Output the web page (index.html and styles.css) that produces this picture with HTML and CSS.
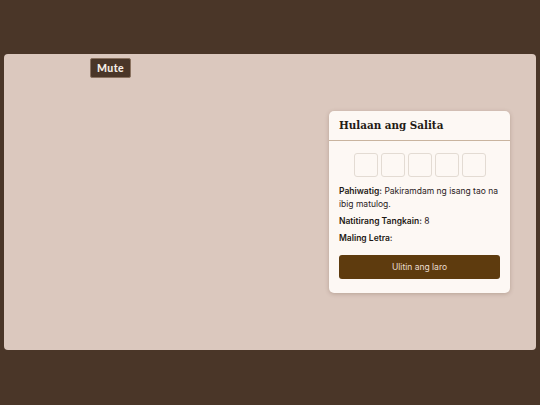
FILE: index.html
```
<!DOCTYPE html>
<html>
<head>
<meta charset="utf-8">
<link rel="stylesheet" href="styles.css">
</head>
<body>
<div class="page">
  <div class="stage">
    <button class="mute">Mute</button>
    <div class="card">
      <div class="card-head">Hulaan ang Salita</div>
      <div class="card-body">
        <div class="slots">
          <span class="slot"></span><span class="slot"></span><span class="slot"></span><span class="slot"></span><span class="slot"></span>
        </div>
        <p class="line"><b>Pahiwatig:</b> Pakiramdam ng isang tao na ibig matulog.</p>
        <p class="line"><b>Natitirang Tangkain:</b> 8</p>
        <p class="line"><b>Maling Letra:</b></p>
        <button class="retry">Ulitin ang laro</button>
      </div>
    </div>
  </div>
</div>
</body>
</html>
```
FILE: styles.css
```
html, body { margin: 0; padding: 0; }
body {
  background: #4a3628;
  width: 540px;
  height: 405px;
  font-family: "Inter", "Open Sans", sans-serif;
}
.page {
  padding: 54px 4px 55px 4px;
}
.stage {
  position: relative;
  height: 296px;
  background: #dbc8be;
  border-radius: 4px;
  display: flex;
  align-items: center;
  justify-content: flex-end;
  padding-right: 26px;
  box-sizing: border-box;
}
.mute {
  position: absolute;
  left: 86px;
  top: 4px;
  width: 41px;
  height: 20px;
  padding: 0;
  background: #4a3628;
  color: #f5ede6;
  border: 1px solid #8a7260;
  border-radius: 2px;
  font-family: "Lato", sans-serif;
  font-weight: 900;
  font-size: 10.5px;
  letter-spacing: 0.4px;
}
.card {
  width: 181px;
  background: #fdf8f4;
  border-radius: 5px;
  box-shadow: 0 1px 4px rgba(80, 50, 30, 0.25);
}
.card-head {
  height: 30px;
  box-sizing: border-box;
  padding: 7px 10px 0 10px;
  border-bottom: 1px solid #c9b49f;
  font-family: "DejaVu Serif Condensed", "DejaVu Serif", serif;
  font-weight: bold;
  font-size: 11.5px;
  color: #241a14;
}
.card-body {
  padding: 12px 10px 14px 10px;
}
.slots {
  display: flex;
  justify-content: center;
  gap: 3px;
  margin-bottom: 8px;
}
.slot {
  width: 22px;
  height: 22px;
  border: 1px solid #e3dbd3;
  border-radius: 3px;
  background: #fdf8f4;
}
.line {
  margin: 0 0 4px 0;
  font-size: 8.5px;
  line-height: 13px;
  color: #2a211c;
}
.line b { font-weight: 600; color: #1e1814; }
.retry {
  display: block;
  width: 100%;
  height: 24px;
  margin-top: 10px;
  background: #5e3b0e;
  color: #eadfd2;
  border: none;
  border-radius: 3px;
  font-family: "Inter", sans-serif;
  font-size: 8.5px;
}
```
